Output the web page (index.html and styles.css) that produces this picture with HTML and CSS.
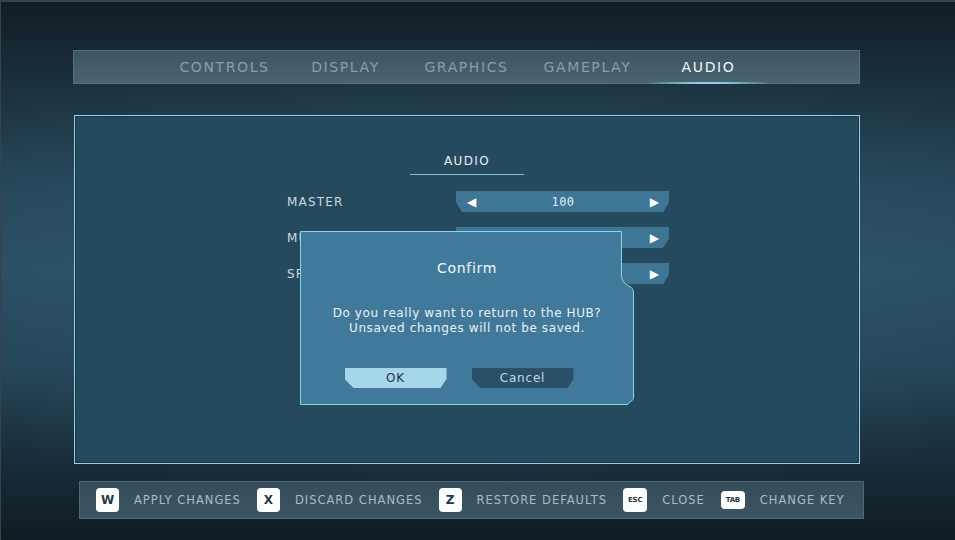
FILE: index.html
```html
<!DOCTYPE html>
<html lang="en">
<head>
<meta charset="utf-8">
<title>Settings - Audio</title>
<link rel="stylesheet" href="styles.css">
</head>
<body>
<div class="screen">
  <nav class="tabs">
    <span class="tab">CONTROLS</span>
    <span class="tab">DISPLAY</span>
    <span class="tab">GRAPHICS</span>
    <span class="tab">GAMEPLAY</span>
    <span class="tab active">AUDIO</span>
  </nav>

  <section class="panel">
    <h2 class="section-title">AUDIO</h2>
    <div class="rows">
      <div class="row">
        <span class="label">MASTER</span>
        <div class="slider"><span class="arrow">&#9664;</span><span class="value">100</span><span class="arrow">&#9654;</span></div>
      </div>
      <div class="row">
        <span class="label">MUSIC</span>
        <div class="slider"><span class="arrow">&#9664;</span><span class="value">100</span><span class="arrow">&#9654;</span></div>
      </div>
      <div class="row">
        <span class="label">SFX</span>
        <div class="slider"><span class="arrow">&#9664;</span><span class="value">100</span><span class="arrow">&#9654;</span></div>
      </div>
    </div>
  </section>

  <footer class="hints">
    <span class="key">W</span><span class="hint">APPLY CHANGES</span>
    <span class="key">X</span><span class="hint">DISCARD CHANGES</span>
    <span class="key">Z</span><span class="hint">RESTORE DEFAULTS</span>
    <span class="key small">ESC</span><span class="hint">CLOSE</span>
    <span class="key small short">TAB</span><span class="hint">CHANGE KEY</span>
  </footer>

  <div class="dialog">
    <svg class="dialog-shape" viewBox="0 0 334 174" preserveAspectRatio="none" aria-hidden="true">
      <path d="M0.5 0.5 H321.5 V44 Q321.5 52 329 55 Q333.5 57 333.5 62 V168 L327.5 173.5 H0.5 Z" fill="#41799a" stroke="#8fd3ea" stroke-width="1"/>
    </svg>
    <div class="dialog-body">
      <h3 class="dialog-title">Confirm</h3>
      <p class="dialog-text">Do you really want to return to the HUB?<br>Unsaved changes will not be saved.</p>
      <div class="dialog-buttons">
        <span class="btn btn-ok">OK</span>
        <span class="btn btn-cancel">Cancel</span>
      </div>
    </div>
  </div>
</div>
</body>
</html>
```

FILE: styles.css
```css
* { box-sizing: border-box; }

html, body {
  margin: 0;
  padding: 0;
  width: 955px;
  height: 540px;
  overflow: hidden;
  font-family: "DejaVu Sans", "Liberation Sans", sans-serif;
}

.screen {
  position: relative;
  width: 955px;
  height: 540px;
  border-top: 2px solid #3b4245;
  border-left: 1px solid #3b4245;
  padding: 48px 0 0 72px;
  display: flex;
  flex-direction: column;
  align-items: flex-start;
  background:
    radial-gradient(ellipse 70% 45% at 50% 50%, rgba(60, 110, 135, 0.35), rgba(0, 0, 0, 0) 100%),
    linear-gradient(to bottom, #111c24 0%, #1a303d 15%, #264658 35%, #2a4c60 50%, #244455 68%, #182d3a 85%, #101b22 100%);
}

/* ---------- tabs ---------- */
.tabs {
  width: 787px;
  height: 34px;
  display: flex;
  justify-content: center;
  align-items: center;
  background: linear-gradient(to bottom, #3d5563, #4a6472);
  border: 1px solid #566f7c;
}

.tab {
  position: relative;
  width: 121px;
  text-align: center;
  font-size: 14px;
  letter-spacing: 1.6px;
  color: #8a9ea7;
  line-height: 18px;
}

.tab.active {
  color: #eef6fa;
}

.tab.active::after {
  content: "";
  position: absolute;
  left: -5px;
  right: -5px;
  bottom: -8px;
  height: 2px;
  border-radius: 1px;
  background: radial-gradient(ellipse at center, #d8f6ff 0%, #8ad2e8 35%, rgba(120, 200, 225, 0) 75%);
}

/* ---------- panel ---------- */
.panel {
  margin-top: 31px;
  margin-left: 1px;
  width: 786px;
  height: 349px;
  background: #254a5e;
  border: 1px solid #93d3e6;
  box-shadow: inset 0 0 0 1px #1b3544;
  padding-top: 37px;
  display: flex;
  flex-direction: column;
  align-items: center;
}

.section-title {
  margin: 0;
  width: 114px;
  text-align: center;
  font-size: 12px;
  font-weight: normal;
  letter-spacing: 1.4px;
  color: #e6f1f5;
  line-height: 16px;
  padding-bottom: 5px;
  border-bottom: 1px solid #8fb9c9;
}

.rows {
  margin-top: 16px;
  margin-left: 22px;
  display: flex;
  flex-direction: column;
  gap: 15px;
}

.row {
  display: flex;
  align-items: center;
  width: 382px;
}

.label {
  width: 169px;
  padding-top: 1px;
  font-size: 12px;
  letter-spacing: 1.2px;
  color: #cbd9df;
}

.slider {
  width: 213px;
  height: 21px;
  background: #3e7695;
  clip-path: polygon(0 0, 100% 0, 100% 55%, calc(100% - 6px) 100%, 6px 100%, 0 55%);
  display: flex;
  align-items: center;
  justify-content: space-between;
  padding: 0 10px 0 11px;
  color: #ffffff;
  font-size: 11px;
}

.arrow {
  font-size: 12px;
  line-height: 1;
}

.value {
  font-family: "DejaVu Sans Mono", "Liberation Mono", monospace;
  font-size: 12px;
  letter-spacing: 0.5px;
  color: #dfeef4;
}

/* ---------- bottom hints ---------- */
.hints {
  margin-top: 17px;
  margin-left: 6px;
  width: 785px;
  height: 38px;
  display: flex;
  align-items: center;
  padding-left: 16px;
  background: linear-gradient(to bottom, #344d5b, #3b5563);
  border: 1px solid #4f6876;
}

.key {
  width: 23px;
  height: 24px;
  border-radius: 4px;
  background: #ffffff;
  color: #233846;
  font-size: 12px;
  font-weight: bold;
  display: flex;
  align-items: center;
  justify-content: center;
  margin-right: 15px;
  flex: none;
}

.key.small {
  width: 24px;
  font-size: 7px;
  letter-spacing: -0.2px;
}

.key.short {
  height: 18px;
}

.hint {
  flex: none;
  white-space: nowrap;
  font-size: 11.5px;
  letter-spacing: 1px;
  color: #a9bcc5;
  margin-right: 16px;
}

/* ---------- confirm dialog ---------- */
.dialog {
  position: absolute;
  left: 299px;
  top: 229px;
  width: 334px;
  height: 174px;
}

.dialog-shape {
  position: absolute;
  inset: 0;
  width: 100%;
  height: 100%;
}

.dialog-body {
  position: relative;
  height: 100%;
  display: flex;
  flex-direction: column;
  align-items: center;
  padding-top: 28px;
}

.dialog-title {
  margin: 0;
  font-size: 14px;
  font-weight: normal;
  letter-spacing: 0.7px;
  color: #f1f8fb;
  line-height: 18px;
}

.dialog-text {
  margin: 29px 0 0;
  text-align: center;
  font-size: 12px;
  line-height: 15px;
  letter-spacing: 0.6px;
  color: #e8f2f6;
}

.dialog-buttons {
  margin-top: 32px;
  margin-right: 16px;
  display: flex;
  gap: 25px;
}

.btn {
  width: 102px;
  height: 20px;
  display: flex;
  align-items: center;
  justify-content: center;
  font-size: 12px;
  letter-spacing: 0.8px;
  clip-path: polygon(0 0, 100% 0, 100% 55%, calc(100% - 6px) 100%, 9px 100%, 0 55%);
}

.btn-ok {
  background: #a6d6ea;
  color: #1c3442;
}

.btn-cancel {
  background: #2a5069;
  color: #c3d7df;
}
```
